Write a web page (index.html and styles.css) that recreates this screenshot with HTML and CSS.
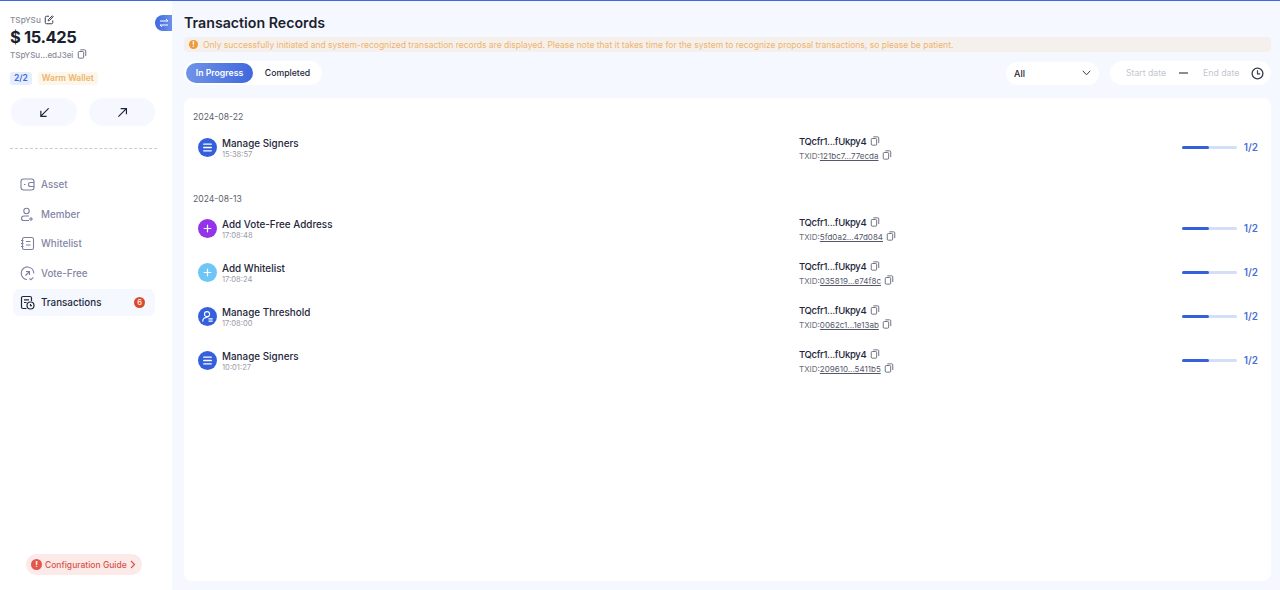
FILE: index.html
```html
<!DOCTYPE html>
<html lang="en">
<head>
    <meta charset="UTF-8">
    <meta name="viewport" content="width=device-width, initial-scale=1.0">
    <title>Transaction Records</title>
    <link rel="stylesheet" href="styles.css">
</head>
<body>
<svg class="defs" width="0" height="0">
    <symbol id="copy" viewBox="0 0 12 12"><rect x="1.5" y="3" width="6.5" height="8" rx="1.2" fill="none" stroke="currentColor"/><path d="M4 1h5.2c.7 0 1.3.6 1.3 1.3V8.5" fill="none" stroke="currentColor"/></symbol>
    <symbol id="signers" viewBox="0 0 20 20"><path d="M6 6.5h8M6 10h8M6 13.5h8" stroke="#fff" stroke-width="1.4" stroke-linecap="round"/></symbol>
    <symbol id="plus" viewBox="0 0 20 20"><path d="M10 6.5v7M6.5 10h7" stroke="#fff" stroke-width="1.3" stroke-linecap="round"/></symbol>
    <symbol id="threshold" viewBox="0 0 20 20"><circle cx="9.5" cy="7.5" r="2.7" fill="none" stroke="#fff" stroke-width="1.2"/><path d="M5 15c0-2.6 2-4 4.5-4M11.5 12.5h3.5M11.5 14.8h3.5" fill="none" stroke="#fff" stroke-width="1.2" stroke-linecap="round"/></symbol>
</svg>
<div class="app">
    <aside class="sidebar">
        <button class="switch" aria-label="Switch wallet">
            <svg width="10" height="10" viewBox="0 0 10 10"><path d="M1 3h8L7 1.2M9 7H1l2 1.8" fill="none" stroke="#fff" stroke-width="1"/></svg>
        </button>
        <div class="wallet-name">TSpYSu
            <svg width="10" height="10" viewBox="0 0 12 12"><path d="M6 1.5H3A1.5 1.5 0 0 0 1.5 3v6A1.5 1.5 0 0 0 3 10.500h6A1.500 1.500 0 0 0 10.500 9V6.500M5 7l.3-1.500L10 1l1 1-4.500 4.700z" fill="none" stroke="#3a3d4a" stroke-width="1.200"/></svg>
        </div>
        <div class="balance">$ 15.425</div>
        <div class="wallet-addr">TSpYSu...edJ3ei <svg class="copy" width="10" height="10"><use href="#copy"/></svg></div>
        <div class="tags">
            <span class="tag-count">2/2</span>
            <span class="tag-warm">Warm Wallet</span>
        </div>
        <div class="actions">
            <button class="action" aria-label="Receive"><svg width="11" height="11" viewBox="0 0 12 12"><path d="M10.500 1.500 2 10M2 4v6.300h6.300" fill="none" stroke="#23263a" stroke-width="1.300"/></svg></button>
            <button class="action" aria-label="Send"><svg width="11" height="11" viewBox="0 0 12 12"><path d="M1.500 10.500 10 2M4 1.700h6.300V8" fill="none" stroke="#23263a" stroke-width="1.300"/></svg></button>
        </div>
        <nav class="nav">
            <a class="nav-item">
                <svg width="15" height="15" viewBox="0 0 15 15" fill="none" stroke="#7c7f9e" stroke-width="1.100"><rect x="1" y="2" width="13" height="11" rx="2.500"/><path d="M14 5.500h-3.500a2 2 0 0 0 0 4H14M4 7.500h1.500"/></svg>
                Asset
            </a>
            <a class="nav-item">
                <svg width="15" height="15" viewBox="0 0 15 15" fill="none" stroke="#7c7f9e" stroke-width="1.100"><circle cx="6.500" cy="4" r="2.700"/><path d="M9 9H4a2.500 2.500 0 0 0-2.500 2.500c0 1.200.8 2 2 2H9M11 10v4M9 12h4"/></svg>
                Member
            </a>
            <a class="nav-item">
                <svg width="15" height="15" viewBox="0 0 15 15" fill="none" stroke="#7c7f9e" stroke-width="1.100"><rect x="2.500" y="1.500" width="11" height="12" rx="1.800"/><path d="M6 5.500h4.500M6 9h4.500M1 4.500h2.500M1 7.500h2.500M1 10.500h2.500"/></svg>
                Whitelist
            </a>
            <a class="nav-item">
                <svg width="15" height="15" viewBox="0 0 15 15" fill="none" stroke="#7c7f9e" stroke-width="1.100"><path d="M7 13.500A6.300 6.300 0 1 1 13.800 7.500M5.500 9.500l4-4M6 5.500h3.500V9M9.500 12.500l1.300 1.300 2.500-2.500"/></svg>
                Vote-Free
            </a>
            <a class="nav-item active">
                <svg width="15" height="15" viewBox="0 0 15 15" fill="none" stroke="#23263a" stroke-width="1.200"><path d="M6.500 13.500H3A1.500 1.500 0 0 1 1.500 12V3A1.500 1.500 0 0 1 3 1.500h7A1.500 1.500 0 0 1 11.500 3v3M4 4.800h5M4 7.500h2.500"/><circle cx="10.500" cy="10.500" r="3.500"/><path d="M10.500 9v1.700h1.400"/></svg>
                Transactions
                <span class="badge">6</span>
            </a>
        </nav>
        <a class="guide">
            <span class="guide-mark">!</span>
            Configuration Guide
            <svg width="6" height="9" viewBox="0 0 6 9"><path d="M1 1l3.500 3.500L1 8" fill="none" stroke="#d9534a" stroke-width="1.200"/></svg>
        </a>
    </aside>

    <main class="main">
        <h1 class="title">Transaction Records</h1>
        <div class="notice">
            <span class="notice-mark">!</span>
            Only successfully initiated and system-recognized transaction records are displayed. Please note that it takes time for the system to recognize proposal transactions, so please be patient.
        </div>
        <div class="toolbar">
            <div class="tabs">
                <span class="tab active">In Progress</span>
                <span class="tab">Completed</span>
            </div>
            <div class="select">All
                <svg width="9" height="6" viewBox="0 0 9 6"><path d="M.8.800 4.500 4.800 8.200.8" fill="none" stroke="#3a3d4a" stroke-width="1"/></svg>
            </div>
            <div class="dates">
                <span class="date-input">Start date</span>
                <span class="date-sep"></span>
                <span class="date-input">End date</span>
                <svg width="13" height="13" viewBox="0 0 12 12"><circle cx="6" cy="6" r="5" fill="none" stroke="#3a3d4a" stroke-width="1.200"/><path d="M6 3v3.300h2.500" fill="none" stroke="#3a3d4a" stroke-width="1.100"/></svg>
            </div>
        </div>

        <section class="card">
            <div class="day">2024-08-22</div>
            <div class="row">
                <svg class="row-icon blue"><use href="#signers"/></svg>
                <div class="row-text"><div class="row-name">Manage Signers</div><div class="row-time">15:38:57</div></div>
                <div class="row-addr"><div class="addr">TQcfr1...fUkpy4 <svg class="copy" width="10" height="10"><use href="#copy"/></svg></div><div class="txid">TXID:<u>121bc7...77ecda</u> <svg class="copy" width="10" height="10"><use href="#copy"/></svg></div></div>
                <div class="progress"><span class="bar"><span class="bar-fill"></span></span><b>1/2</b></div>
            </div>

            <div class="day second">2024-08-13</div>
            <div class="row">
                <svg class="row-icon purple"><use href="#plus"/></svg>
                <div class="row-text"><div class="row-name">Add Vote-Free Address</div><div class="row-time">17:08:48</div></div>
                <div class="row-addr"><div class="addr">TQcfr1...fUkpy4 <svg class="copy" width="10" height="10"><use href="#copy"/></svg></div><div class="txid">TXID:<u>5fd0a2...47d084</u> <svg class="copy" width="10" height="10"><use href="#copy"/></svg></div></div>
                <div class="progress"><span class="bar"><span class="bar-fill"></span></span><b>1/2</b></div>
            </div>
            <div class="row">
                <svg class="row-icon sky"><use href="#plus"/></svg>
                <div class="row-text"><div class="row-name">Add Whitelist</div><div class="row-time">17:08:24</div></div>
                <div class="row-addr"><div class="addr">TQcfr1...fUkpy4 <svg class="copy" width="10" height="10"><use href="#copy"/></svg></div><div class="txid">TXID:<u>035819...e74f8c</u> <svg class="copy" width="10" height="10"><use href="#copy"/></svg></div></div>
                <div class="progress"><span class="bar"><span class="bar-fill"></span></span><b>1/2</b></div>
            </div>
            <div class="row">
                <svg class="row-icon blue"><use href="#threshold"/></svg>
                <div class="row-text"><div class="row-name">Manage Threshold</div><div class="row-time">17:08:00</div></div>
                <div class="row-addr"><div class="addr">TQcfr1...fUkpy4 <svg class="copy" width="10" height="10"><use href="#copy"/></svg></div><div class="txid">TXID:<u>0062c1...1e13ab</u> <svg class="copy" width="10" height="10"><use href="#copy"/></svg></div></div>
                <div class="progress"><span class="bar"><span class="bar-fill"></span></span><b>1/2</b></div>
            </div>
            <div class="row">
                <svg class="row-icon blue"><use href="#signers"/></svg>
                <div class="row-text"><div class="row-name">Manage Signers</div><div class="row-time">10:01:27</div></div>
                <div class="row-addr"><div class="addr">TQcfr1...fUkpy4 <svg class="copy" width="10" height="10"><use href="#copy"/></svg></div><div class="txid">TXID:<u>209610...5411b5</u> <svg class="copy" width="10" height="10"><use href="#copy"/></svg></div></div>
                <div class="progress"><span class="bar"><span class="bar-fill"></span></span><b>1/2</b></div>
            </div>
        </section>
    </main>
</div>
</body>
</html>
```

FILE: styles.css
```css
* {
    box-sizing: border-box;
}
body {
    margin: 0;
    height: 590px;
    overflow: hidden;
    font-family: Inter, "Liberation Sans", sans-serif;
    color: #23263a;
    background-color: #f5f8ff;
    border-top: 1px solid #3f68de;
}
button {
    border: none;
    padding: 0;
    font: inherit;
}
svg {
    display: block;
    flex: none;
}
.defs {
    position: absolute;
}
.copy {
    color: #55586a;
    display: inline-block;
    vertical-align: -1px;
    margin-left: 1px;
}
.app {
    display: flex;
    height: 589px;
}

/* sidebar */
.sidebar {
    position: relative;
    width: 172px;
    flex: none;
    display: flex;
    flex-direction: column;
    background-color: #fff;
    padding: 13px 0 15px 10px;
}
.switch {
    position: absolute;
    top: 14px;
    right: 0;
    width: 17px;
    height: 16px;
    display: flex;
    align-items: center;
    justify-content: center;
    border-radius: 8px 0 0 8px;
    background: linear-gradient(90deg, #3f68de, #6d90ea);
}
.wallet-name {
    display: flex;
    align-items: center;
    gap: 3px;
    height: 12px;
    font-size: 8.2px;
    font-weight: 500;
    color: #8a8c99;
}
.balance {
    height: 22px;
    line-height: 22px;
    font-size: 16.5px;
    font-weight: 700;
    letter-spacing: -.4px;
    color: #1c1f2e;
}
.wallet-addr {
    margin-top: 1px;
    height: 12px;
    line-height: 12px;
    font-size: 8px;
    font-weight: 500;
    color: #8a8c99;
}
.tags {
    display: flex;
    gap: 6px;
    margin-top: 11px;
    font-size: 8.5px;
    font-weight: 600;
    line-height: 13px;
}
.tag-count {
    padding: 0 4px;
    border-radius: 3px;
    color: #3f68de;
    background-color: #e6edfb;
}
.tag-warm {
    padding: 0 4px;
    border-radius: 3px;
    color: #eeb46c;
    background-color: #fdf6ea;
}
.actions {
    display: flex;
    gap: 12px;
    margin-top: 13px;
    padding: 0 0 22px 1px;
    width: 147px;
    border-bottom: 1px dashed #c9cbd3;
}
.action {
    width: 66px;
    height: 28px;
    display: flex;
    align-items: center;
    justify-content: center;
    border-radius: 14px;
    background-color: #f5f8ff;
}
.nav {
    display: flex;
    flex-direction: column;
    margin-top: 22px;
}
.nav-item {
    display: flex;
    align-items: center;
    gap: 6px;
    width: 142px;
    height: 27px;
    margin: 0 0 2.5px 3px;
    padding-left: 7px;
    font-size: 9.8px;
    font-weight: 500;
    color: #8486a5;
    border-radius: 7px;
}
.nav-item.active {
    color: #23263a;
    background-color: #f5f8ff;
}
.badge {
    width: 11px;
    height: 11px;
    margin-left: auto;
    margin-right: 10px;
    border-radius: 50%;
    font-size: 7.5px;
    line-height: 11px;
    text-align: center;
    color: #fff;
    background-color: #dc4a2c;
}
.guide {
    display: flex;
    align-items: center;
    align-self: flex-start;
    gap: 3px;
    height: 21px;
    margin: auto 0 0 16px;
    padding: 0 6px 0 5px;
    border-radius: 11px;
    font-size: 8.5px;
    font-weight: 500;
    color: #d9534a;
    background-color: #fbeae8;
}
.guide-mark {
    width: 11px;
    height: 11px;
    border-radius: 50%;
    font-size: 8px;
    font-weight: 700;
    line-height: 11px;
    text-align: center;
    color: #fff;
    background-color: #e2574c;
}

/* main */
.main {
    flex: 1;
    min-width: 0;
    display: flex;
    flex-direction: column;
    padding: 12px 9px 9px 12px;
}
.title {
    margin: 0;
    height: 20px;
    line-height: 20px;
    font-size: 14.2px;
    font-weight: 600;
    color: #1c1f2e;
}
.notice {
    display: flex;
    align-items: center;
    gap: 5px;
    height: 15px;
    margin-top: 4px;
    padding-left: 5px;
    border-radius: 4px;
    font-size: 8.53px;
    white-space: nowrap;
    color: #eeb46c;
    background-color: #f6f0ec;
}
.notice-mark {
    width: 9px;
    height: 9px;
    border-radius: 50%;
    font-size: 7px;
    font-weight: 700;
    line-height: 9px;
    text-align: center;
    color: #fff;
    background-color: #ee9a3a;
}
.toolbar {
    display: flex;
    align-items: center;
    margin-top: 9px;
    height: 24px;
}
.tabs {
    display: flex;
    height: 24px;
    padding: 2px 0 2px 2px;
    border-radius: 12px;
    background-color: #fff;
    margin-right: auto;
}
.tab {
    width: 69px;
    border-radius: 10px;
    font-size: 8.7px;
    font-weight: 500;
    line-height: 20px;
    text-align: center;
}
.tab.active {
    width: 67px;
    font-weight: 600;
    color: #fff;
    background: linear-gradient(90deg, #7093e8, #3f68de);
}
.select {
    display: flex;
    align-items: center;
    justify-content: space-between;
    width: 93px;
    height: 23px;
    padding: 0 8px;
    border-radius: 12px;
    font-size: 9px;
    font-weight: 500;
    background-color: #fff;
}
.dates {
    display: flex;
    align-items: center;
    width: 161px;
    height: 24px;
    margin-left: 11px;
    padding-left: 16px;
    border-radius: 12px;
    font-size: 8.7px;
    color: #c4c6d0;
    background-color: #fff;
}
.date-input {
    white-space: nowrap;
}
.date-sep {
    width: 9px;
    height: 1.5px;
    margin: 0 15px 0 13px;
    background-color: #8a8c99;
}
.dates svg {
    margin-left: 12px;
}
.card {
    flex: 1;
    margin-top: 13px;
    padding: 14px 13px 0 9px;
    border-radius: 8px;
    background-color: #fff;
}
.day {
    height: 11px;
    line-height: 11px;
    font-size: 8.6px;
    color: #5c5e6c;
}
.day.second {
    margin-top: 28px;
}
.row {
    display: grid;
    grid-template-columns: 24px 577px 1fr auto;
    align-items: center;
    height: 44px;
    padding-left: 5px;
}
.day + .row {
    margin-top: 5px;
    height: 38px;
}
.day.second + .row {
    margin-top: 4px;
}
.day.second + .row + .row {
    margin-top: 3px;
}
.row-icon {
    width: 19px;
    height: 19px;
    border-radius: 50%;
}
.blue {
    background-color: #3460dc;
}
.purple {
    background-color: #9333ea;
}
.sky {
    background-color: #6ec6f7;
}
.row-text {
    padding-top: 2px;
}
.row-addr {
    padding-top: 3px;
}
.row-name {
    font-size: 9.9px;
    font-weight: 500;
    line-height: 13px;
    color: #23263a;
}
.row-time {
    font-size: 7.6px;
    line-height: 10px;
    color: #9a9ca8;
}
.addr {
    font-size: 9.5px;
    font-weight: 500;
    letter-spacing: -.3px;
    line-height: 14px;
    color: #23263a;
}
.txid {
    margin-top: 1px;
    font-size: 8px;
    line-height: 13px;
    color: #6b6d7b;
}
.txid u {
    color: #55586a;
}
.progress {
    display: flex;
    align-items: center;
    gap: 7px;
}
.bar {
    width: 55px;
    height: 3px;
    border-radius: 2px;
    background-color: #d4def6;
}
.bar-fill {
    display: block;
    width: 50%;
    height: 100%;
    border-radius: 2px;
    background-color: #3460dc;
}
.progress b {
    font-size: 10px;
    font-weight: 600;
    color: #4a70d8;
}
```
